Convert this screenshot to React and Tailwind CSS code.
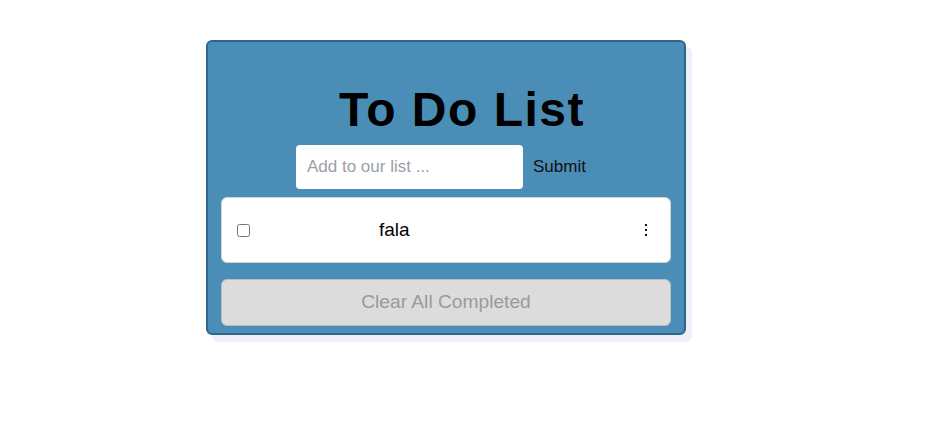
import { useState } from "react";

const FONT = { fontFamily: '"Liberation Sans", Arial, sans-serif' };

function DotsIcon() {
  return (
    <svg width="4" height="12" viewBox="0 0 4 12" fill="#111">
      <rect x="1" y="0" width="2" height="2" />
      <rect x="1" y="5" width="2" height="2" />
      <rect x="1" y="10" width="2" height="2" />
    </svg>
  );
}

export default function App() {
  const [text, setText] = useState("");
  const [todos, setTodos] = useState([{ id: 1, label: "fala", done: false }]);

  function addTodo(e) {
    e.preventDefault();
    if (!text.trim()) return;
    setTodos(t => [...t, { id: Date.now(), label: text.trim(), done: false }]);
    setText("");
  }

  return (
    <div className="min-h-[439px] bg-white pt-[40px]" style={FONT}>
      <div className="ml-[206px] w-[480px] h-[295px] rounded-[6px] border-2 border-[#33658a] bg-[#4a8db7] shadow-[6px_7px_1px_#eef0f9] px-[13px] flex flex-col">
        <h1 className="mt-[40px] pl-8 text-center text-[48px] leading-[56px] font-bold tracking-[1.5px] text-black">
          To Do List
        </h1>

        <form onSubmit={addTodo} className="mt-[7px] flex items-center ml-[75px]">
          <input
            type="text"
            value={text}
            onChange={e => setText(e.target.value)}
            placeholder="Add to our list ..."
            className="w-[227px] h-[44px] rounded-[4px] bg-white px-[11px] text-[17px] text-black placeholder:text-[#9aa0a6] outline-none"
          />
          <button type="submit" className="ml-[10px] text-[17px] text-[#111]">
            Submit
          </button>
        </form>

        <ul className="mt-[8px]">
          {todos.map(t => (
            <li
              key={t.id}
              className="flex items-center h-[66px] rounded-[6px] border border-[#d0d5da] bg-white mb-[16px]"
            >
              <input
                type="checkbox"
                checked={t.done}
                onChange={() => setTodos(ts => ts.map(x => x.id === t.id ? { ...x, done: !x.done } : x))}
                className="m-0 ml-[15px] w-[13px] h-[13px]"
              />
              <span className="ml-[129px] text-[19px] text-black">{t.label}</span>
              <span className="ml-auto mr-[22px] flex items-center">
                <DotsIcon />
              </span>
            </li>
          ))}
        </ul>

        <button
          onClick={() => setTodos(ts => ts.filter(x => !x.done))}
          className="h-[47px] w-full rounded-[6px] border border-[#b9bec4] bg-[#dcdcdc] text-[19.2px] text-[#9a9a9a]"
        >
          Clear All Completed
        </button>
      </div>
    </div>
  );
}
